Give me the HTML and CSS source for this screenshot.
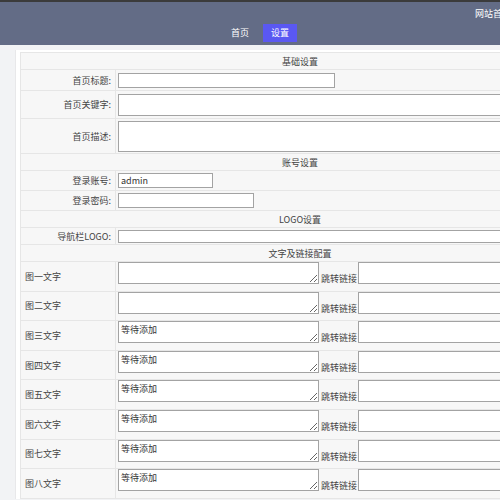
FILE: index.html
```html
<!DOCTYPE html>
<html lang="zh-CN">
<head>
    <meta charset="UTF-8">
    <meta name="viewport" content="width=device-width, initial-scale=1.0">
    <title>网站设置</title>
    <link rel="stylesheet" href="styles.css">
</head>
<body>
    <div class="page">
        <div class="header">
            <div class="header-top">网站首页</div>
            <div class="nav">
                <a class="nav-item" href="#">首页</a>
                <a class="nav-item active" href="#">设置</a>
            </div>
        </div>
        <div class="content">
            <form class="panel">
                <table class="settings">
                    <tr class="section"><td colspan="2">基础设置</td></tr>
                    <tr class="row-title">
                        <td class="label">首页标题:</td>
                        <td><input type="text" class="inp inp-title"></td>
                    </tr>
                    <tr class="row-keys">
                        <td class="label">首页关键字:</td>
                        <td><textarea class="ta ta-keys"></textarea></td>
                    </tr>
                    <tr class="row-desc">
                        <td class="label">首页描述:</td>
                        <td><textarea class="ta ta-desc"></textarea></td>
                    </tr>
                    <tr class="section"><td colspan="2">账号设置</td></tr>
                    <tr class="row-acc">
                        <td class="label">登录账号:</td>
                        <td><input type="text" class="inp inp-user" value="admin"></td>
                    </tr>
                    <tr class="row-acc">
                        <td class="label">登录密码:</td>
                        <td><input type="password" class="inp inp-pass"></td>
                    </tr>
                    <tr class="section"><td colspan="2">LOGO设置</td></tr>
                    <tr class="row-logo">
                        <td class="label">导航栏LOGO:</td>
                        <td><input type="text" class="inp inp-logo"></td>
                    </tr>
                    <tr class="section"><td colspan="2">文字及链接配置</td></tr>
                    <tr class="row-pic">
                        <td class="label-left">图一文字</td>
                        <td><div class="pic"><textarea class="ta ta-pic"></textarea><span class="link-label">跳转链接</span><input type="text" class="inp inp-link"></div></td>
                    </tr>
                    <tr class="row-pic">
                        <td class="label-left">图二文字</td>
                        <td><div class="pic"><textarea class="ta ta-pic"></textarea><span class="link-label">跳转链接</span><input type="text" class="inp inp-link"></div></td>
                    </tr>
                    <tr class="row-pic">
                        <td class="label-left">图三文字</td>
                        <td><div class="pic"><textarea class="ta ta-pic">等待添加</textarea><span class="link-label">跳转链接</span><input type="text" class="inp inp-link"></div></td>
                    </tr>
                    <tr class="row-pic">
                        <td class="label-left">图四文字</td>
                        <td><div class="pic"><textarea class="ta ta-pic">等待添加</textarea><span class="link-label">跳转链接</span><input type="text" class="inp inp-link"></div></td>
                    </tr>
                    <tr class="row-pic">
                        <td class="label-left">图五文字</td>
                        <td><div class="pic"><textarea class="ta ta-pic">等待添加</textarea><span class="link-label">跳转链接</span><input type="text" class="inp inp-link"></div></td>
                    </tr>
                    <tr class="row-pic">
                        <td class="label-left">图六文字</td>
                        <td><div class="pic"><textarea class="ta ta-pic">等待添加</textarea><span class="link-label">跳转链接</span><input type="text" class="inp inp-link"></div></td>
                    </tr>
                    <tr class="row-pic">
                        <td class="label-left">图七文字</td>
                        <td><div class="pic"><textarea class="ta ta-pic">等待添加</textarea><span class="link-label">跳转链接</span><input type="text" class="inp inp-link"></div></td>
                    </tr>
                    <tr class="row-pic">
                        <td class="label-left">图八文字</td>
                        <td><div class="pic"><textarea class="ta ta-pic">等待添加</textarea><span class="link-label">跳转链接</span><input type="text" class="inp inp-link"></div></td>
                    </tr>
                </table>
            </form>
        </div>
    </div>
</body>
</html>
```

FILE: styles.css
```css
* {
    box-sizing: border-box;
}
html, body {
    margin: 0;
    overflow: hidden;
}
body {
    font-family: "Noto Sans CJK SC", "Liberation Sans", sans-serif;
    font-size: 9px;
    color: #444;
    background-color: #f2f3f5;
}
.page {
    width: 580px;
}
.header {
    background-color: #636c86;
    border-top: 2px solid #3b3b3b;
    height: 45px;
}
.header-top {
    height: 22px;
    padding: 5px 0 0 475px;
    color: #fff;
    white-space: nowrap;
}
.nav {
    display: flex;
    padding-left: 226px;
    gap: 9px;
}
.nav-item {
    display: block;
    height: 18px;
    line-height: 18px;
    padding: 0 5px;
    color: #fff;
    text-decoration: none;
}
.nav-item.active {
    background-color: #5a58f2;
    padding: 0 8px;
}
.content {
    padding: 5px 0 0 15px;
}
.panel {
    margin: 0;
    background-color: #fff;
    border-left: 1px solid #e8e8ea;
    padding: 2px 0 0 4px;
}
.settings {
    width: 560px;
    border-collapse: collapse;
    background-color: #f7f7f7;
}
.settings td {
    border: 1px solid #e6e6e6;
    padding: 0 2px;
    vertical-align: middle;
}
.settings td.label {
    width: 95px;
    text-align: right;
    padding-right: 4px;
}
.settings td.label-left {
    width: 95px;
    text-align: left;
    padding-left: 4px;
}
.section td {
    text-align: center;
    height: 17px;
}
.row-title td { height: 21px; }
.row-keys td { height: 28px; }
.row-desc td { height: 35px; }
.row-acc td { height: 20px; }
.row-logo td { height: 17px; }
.row-pic td { height: 29.6px; }
.row-pic td:last-child {
    vertical-align: top;
    padding-top: 0;
}
.inp, .ta {
    display: block;
    margin: 0;
    border: 1px solid #a3a3a3;
    background-color: #fff;
    font-family: inherit;
    font-size: 9px;
    color: #333;
    padding: 0 2px;
    outline: none;
}
.inp {
    height: 15px;
}
.inp-title { width: 217px; }
.inp-user { width: 95px; }
.inp-pass { width: 136px; }
.inp-logo { width: 440px; height: 13px; }
.ta {
    resize: both;
}
.ta-keys {
    width: 440px;
    height: 22px;
    overflow-y: scroll;
}
.ta-desc {
    width: 440px;
    height: 31px;
}
.pic {
    display: flex;
    align-items: flex-end;
}
.ta-pic {
    width: 201px;
    height: 22px;
    padding: 1px 2px;
}
.link-label {
    padding: 0 1px 0 2px;
    line-height: 11px;
    white-space: nowrap;
}
.inp-link {
    width: 180px;
    height: 22px;
}
```
